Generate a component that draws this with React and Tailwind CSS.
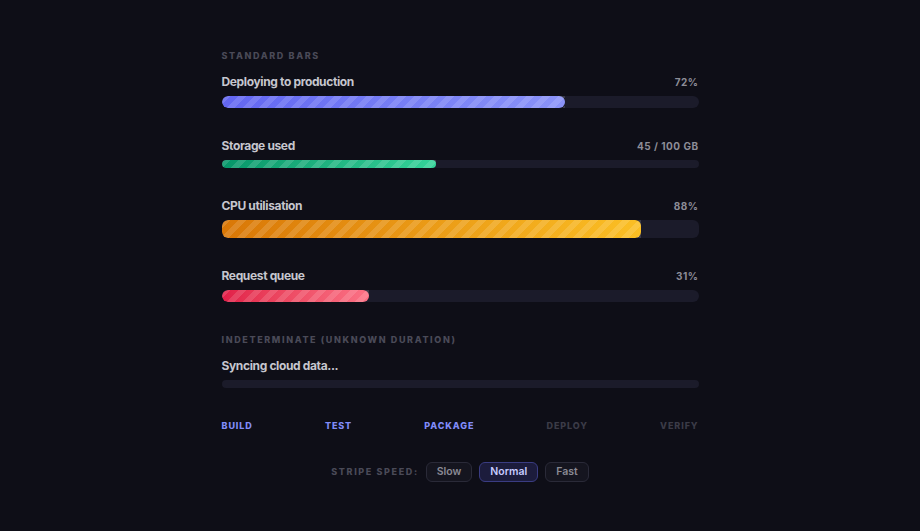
import React from "react";

const stripes =
  "bg-[linear-gradient(135deg,rgba(255,255,255,0.13)_25%,transparent_25%,transparent_50%,rgba(255,255,255,0.13)_50%,rgba(255,255,255,0.13)_75%,transparent_75%,transparent)] bg-[length:16px_16px]";

const bars = [
  {
    label: "Deploying to production",
    value: "72%",
    pct: 72,
    track: "h-3 rounded-full",
    fill: "rounded-full bg-gradient-to-r from-[#6366f1] to-[#8b93f8]",
  },
  {
    label: "Storage used",
    value: "45 / 100 GB",
    pct: 45,
    track: "h-2 rounded-full",
    fill: "rounded-full bg-gradient-to-r from-[#059669] to-[#34d399]",
  },
  {
    label: "CPU utilisation",
    value: "88%",
    pct: 88,
    track: "h-[18px] rounded-md",
    fill: "rounded-md bg-gradient-to-r from-[#d97706] to-[#fbbf24]",
  },
  {
    label: "Request queue",
    value: "31%",
    pct: 31,
    track: "h-3 rounded-full",
    fill: "rounded-full bg-gradient-to-r from-[#e11d48] to-[#fb7185]",
  },
];

const steps = [
  { name: "BUILD", done: true },
  { name: "TEST", done: true },
  { name: "PACKAGE", done: true },
  { name: "DEPLOY", done: false },
  { name: "VERIFY", done: false },
];

const SectionTitle = ({ children }) => (
  <div className="text-[9px] leading-4 font-extrabold tracking-[0.18em] uppercase text-[#4a4a57] mb-2">
    {children}
  </div>
);

const Bar = ({ label, value, pct, track, fill }) => (
  <div>
    <div className="flex items-center justify-between h-5 mb-1">
      <span className="text-[12px] font-bold tracking-[-0.03em] text-[#c6c6ce]">{label}</span>
      <span className="text-[10px] font-bold tracking-[0.05em] text-[#8d8d97]">{value}</span>
    </div>
    <div className={`w-full bg-[#1b1b2a] overflow-hidden ${track}`}>
      <div className={`relative h-full ${fill}`} style={{ width: `${pct}%` }}>
        <div className={`absolute inset-0 ${stripes}`} />
      </div>
    </div>
  </div>
);

export default function App() {
  return (
    <div className="min-h-screen bg-[#0e0e17] flex justify-center pt-12 font-['Inter',sans-serif]">
      <div className="w-[477px]">
        <SectionTitle>Standard bars</SectionTitle>
        <div className="flex flex-col gap-7">
          {bars.map((b) => (
            <Bar key={b.label} {...b} />
          ))}
        </div>

        <div className="mt-[30px]">
          <SectionTitle>Indeterminate (unknown duration)</SectionTitle>
          <div className="flex items-center h-5 mb-1">
            <span className="text-[12px] font-bold tracking-[-0.03em] text-[#c6c6ce]">
              Syncing cloud data...
            </span>
          </div>
          <div className="w-full h-2 rounded-full bg-[#1b1b2a]" />
        </div>

        <div className="mt-[30px] flex justify-between">
          {steps.map((s) => (
            <span
              key={s.name}
              className={`text-[9px] leading-4 font-extrabold tracking-[0.1em] ${
                s.done ? "text-[#818cf8]" : "text-[#3b3b47]"
              }`}
            >
              {s.name}
            </span>
          ))}
        </div>

        <div className="mt-7 flex items-center justify-center gap-[7px]">
          <span className="text-[9px] font-extrabold tracking-[0.18em] text-[#4a4a57]">
            STRIPE SPEED:
          </span>
          <button className="h-5 px-2.5 rounded-md border border-[#2a2a38] bg-[#15151f] text-[10.5px] font-semibold text-[#8a8a94]">
            Slow
          </button>
          <button className="h-5 px-2.5 rounded-md border border-[#3a3c82] bg-[#1c1c3c] text-[10.5px] font-semibold text-[#c7cbff]">
            Normal
          </button>
          <button className="h-5 px-2.5 rounded-md border border-[#2a2a38] bg-[#15151f] text-[10.5px] font-semibold text-[#8a8a94]">
            Fast
          </button>
        </div>
      </div>
    </div>
  );
}
